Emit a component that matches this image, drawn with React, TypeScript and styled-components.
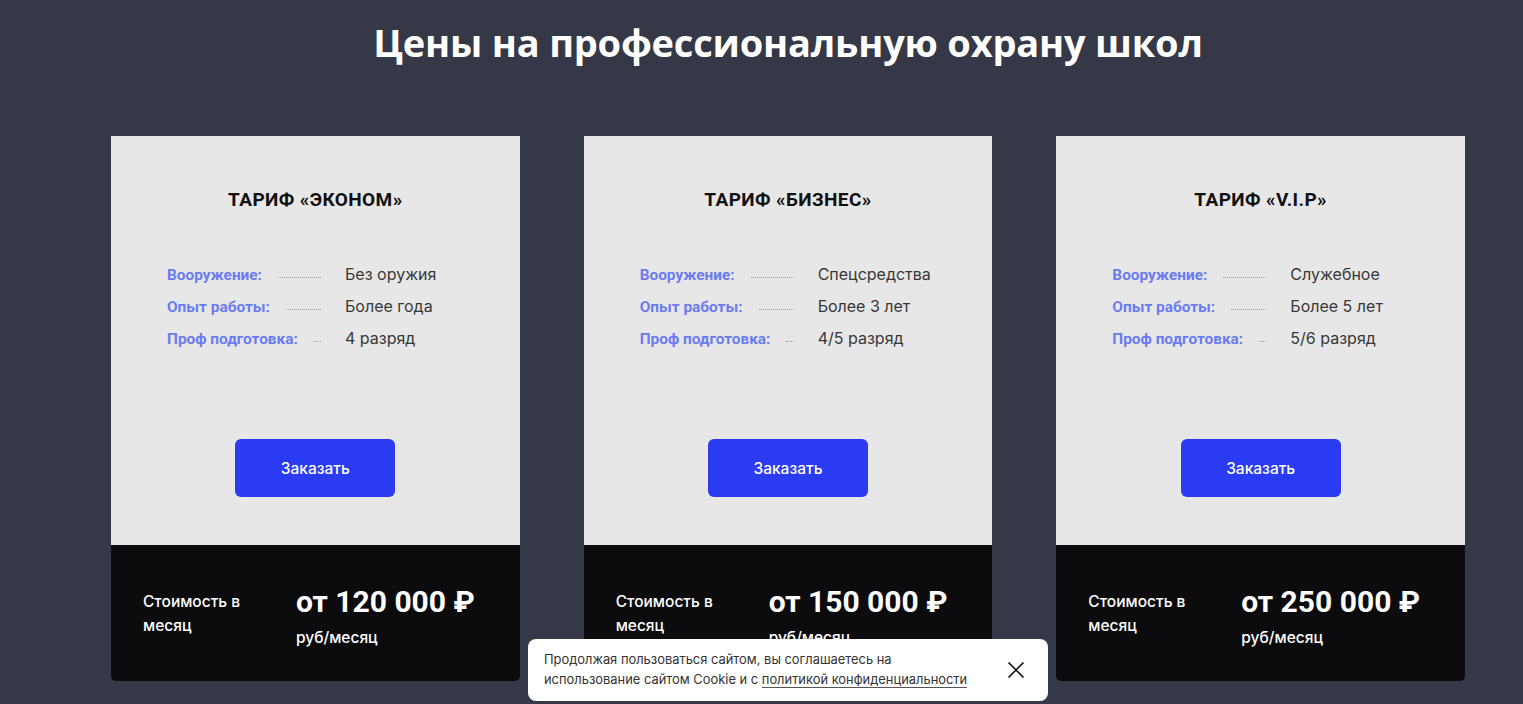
import React from "react";
import styled, { createGlobalStyle } from "styled-components";

const GlobalStyle = createGlobalStyle`
  html, body { margin: 0; padding: 0; }
  body {
    background: #353846;
    font-family: Inter, "Noto Sans", sans-serif;
    -webkit-font-smoothing: antialiased;
  }
`;

const Page = styled.main`
  min-height: 704px;
  padding: 18px 58px 0 111px;
  box-sizing: border-box;
`;

const Inner = styled.div`
  width: 1354px;
`;

const Title = styled.h2`
  margin: 0;
  text-align: center;
  color: #ffffff;
  font-family: "Open Sans", Inter, sans-serif;
  font-weight: 700;
  font-size: 38px;
  line-height: 48px;
  letter-spacing: -0.2px;
`;

const Cards = styled.div`
  display: grid;
  grid-template-columns: repeat(3, 1fr);
  column-gap: 64px;
  margin-top: 70px;
`;

const Card = styled.article`
  display: flex;
  flex-direction: column;
  border-radius: 0 0 5px 5px;
  overflow: hidden;
`;

const Top = styled.div`
  height: 409px;
  background: #e7e7e7;
  box-sizing: border-box;
  padding: 53px 56px 48px;
  display: flex;
  flex-direction: column;
`;

const CardTitle = styled.h3`
  margin: 0;
  text-align: center;
  color: #111111;
  font-family: Roboto, "Liberation Sans", sans-serif;
  font-weight: 700;
  font-size: 19px;
  line-height: 22px;
  letter-spacing: 0.4px;
`;

const Specs = styled.dl`
  margin: 53px 0 0;
  display: flex;
  flex-direction: column;
  gap: 12px;
`;

const Row = styled.div`
  display: grid;
  grid-template-columns: 178px 1fr;
  align-items: baseline;
  height: 20px;
`;

const Label = styled.dt`
  display: flex;
  align-items: baseline;
  padding-right: 24px;
  color: #6b7cef;
  font-family: Roboto, "Liberation Sans", sans-serif;
  font-weight: 700;
  font-size: 15.4px;
  line-height: 20px;
  white-space: nowrap;
`;

const Dots = styled.span`
  flex: 1;
  margin-left: 16px;
  border-bottom: 1px dotted #9a9a9a;
  transform: translateY(-2px);
`;

const Value = styled.dd`
  margin: 0;
  color: #383838;
  font-size: 16px;
  line-height: 20px;
`;

const OrderButton = styled.button`
  margin: auto auto 0;
  width: 160px;
  height: 58px;
  border: none;
  border-radius: 6px;
  background: #2a3bf1;
  color: #ffffff;
  font-family: Inter, sans-serif;
  font-weight: 500;
  font-size: 15.5px;
  cursor: pointer;
`;

const Bottom = styled.div`
  height: 136px;
  background: #0c0c0e;
  box-sizing: border-box;
  padding: 0 32px;
  display: grid;
  grid-template-columns: 153px 1fr;
  align-items: center;
  color: #ffffff;
`;

const CostLabel = styled.div`
  width: 110px;
  font-size: 15.5px;
  line-height: 24px;
  font-weight: 500;
  padding-top: 2px;
`;

const PriceBlock = styled.div`
  display: flex;
  flex-direction: column;
  gap: 9px;
  padding-top: 7px;
`;

const Price = styled.div`
  font-family: Roboto, "Liberation Sans", sans-serif;
  font-weight: 700;
  font-size: 30px;
  line-height: 34px;
`;

const Unit = styled.div`
  font-size: 15.5px;
  line-height: 20px;
  font-weight: 500;
`;

const Cookie = styled.div`
  position: fixed;
  left: 528px;
  bottom: 3px;
  width: 520px;
  height: 62px;
  box-sizing: border-box;
  background: #ffffff;
  border-radius: 8px;
  padding: 0 16px;
  display: flex;
  align-items: center;
  justify-content: space-between;
`;

const CookieText = styled.p`
  margin: 0;
  color: #333333;
  font-size: 12.9px;
  line-height: 20px;
`;

const CookieLink = styled.a`
  color: #333333;
  text-decoration: none;
  border-bottom: 1px solid #555555;
`;

const Close = styled.button`
  width: 32px;
  height: 32px;
  border: none;
  background: transparent;
  padding: 0;
  display: flex;
  align-items: center;
  justify-content: center;
  cursor: pointer;
`;

const plans = [
  {
    name: "ТАРИФ «ЭКОНОМ»",
    specs: ["Без оружия", "Более года", "4 разряд"],
    price: "от 120 000 ₽",
  },
  {
    name: "ТАРИФ «БИЗНЕС»",
    specs: ["Спецсредства", "Более 3 лет", "4/5 разряд"],
    price: "от 150 000 ₽",
  },
  {
    name: "ТАРИФ «V.I.P»",
    specs: ["Служебное", "Более 5 лет", "5/6 разряд"],
    price: "от 250 000 ₽",
  },
];

const labels = ["Вооружение:", "Опыт работы:", "Проф подготовка:"];

export default function App() {
  return (
    <>
      <GlobalStyle />
      <Page>
        <Inner>
          <Title>Цены на профессиональную охрану школ</Title>
          <Cards>
            {plans.map((p) => (
              <Card key={p.name}>
                <Top>
                  <CardTitle>{p.name}</CardTitle>
                  <Specs>
                    {labels.map((l, i) => (
                      <Row key={l}>
                        <Label>
                          {l}
                          <Dots />
                        </Label>
                        <Value>{p.specs[i]}</Value>
                      </Row>
                    ))}
                  </Specs>
                  <OrderButton>Заказать</OrderButton>
                </Top>
                <Bottom>
                  <CostLabel>Стоимость в месяц</CostLabel>
                  <PriceBlock>
                    <Price>{p.price}</Price>
                    <Unit>руб/месяц</Unit>
                  </PriceBlock>
                </Bottom>
              </Card>
            ))}
          </Cards>
        </Inner>
      </Page>
      <Cookie>
        <CookieText>
          Продолжая пользоваться сайтом, вы соглашаетесь на
          <br />
          использование сайтом Cookie и с{" "}
          <CookieLink href="#">политикой конфиденциальности</CookieLink>
        </CookieText>
        <Close aria-label="Закрыть">
          <svg width="18" height="18" viewBox="0 0 18 18">
            <path d="M1.5 1.5 L16.5 16.5 M16.5 1.5 L1.5 16.5" stroke="#111" strokeWidth="1.7" fill="none" />
          </svg>
        </Close>
      </Cookie>
    </>
  );
}
